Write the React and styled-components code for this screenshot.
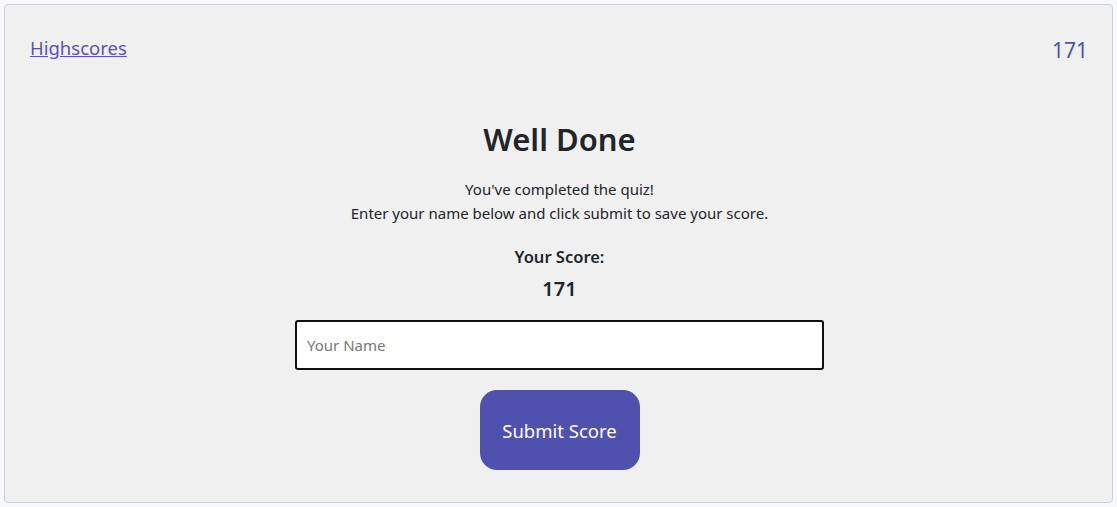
import React from 'react';
import styled, {createGlobalStyle} from 'styled-components';

const Global = createGlobalStyle`
    html, body {
        margin: 0;
        padding: 0;
        background: #f7f8fb;
        font-family: "Noto Sans", "Open Sans", sans-serif;
        color: #212529;
    }
`

const Card = styled.div`
    box-sizing: border-box;
    margin: 4px;
    width: 1109px;
    height: 499px;
    background: #f0f0f0;
    border: 1px solid #cfcfcf;
    border-radius: 4px;
    padding: 30px 25px 0 27px;
`

const TopBar = styled.div`
    display: flex;
    justify-content: space-between;
    align-items: flex-start;
`

const Link = styled.a`
    color: #5b51b8;
    font-size: 18.5px;
    text-decoration: underline;
    line-height: 24px;
    margin-top: 1px;
    margin-left: -2px;
`

const Counter = styled.div`
    color: #5050b0;
    font-size: 21px;
    line-height: 28px;
    margin-top: 1px;
    margin-right: -1px;
`

const Main = styled.div`
    display: flex;
    flex-direction: column;
    align-items: center;
    margin-top: 55px;
`

const Title = styled.h1`
    margin: 0;
    font-size: 31px;
    font-weight: 600;
    line-height: 40px;
`

const Text = styled.p`
    margin: 18px 0 0;
    font-size: 15px;
    line-height: 24px;
    text-align: center;
`

const Label = styled.div`
    margin-top: 18px;
    font-size: 16.5px;
    font-weight: 600;
    line-height: 28px;
`

const Score = styled.div`
    font-size: 20px;
    font-weight: 600;
    line-height: 36px;
`

const Input = styled.input`
    box-sizing: border-box;
    margin-top: 13px;
    width: 529px;
    height: 50px;
    border: 2px solid #111;
    border-radius: 3px;
    background: #fff;
    padding: 0 10px;
    font-family: inherit;
    font-size: 15px;
    outline: none;
    &::placeholder {
        color: #777;
    }
`

const Button = styled.button`
    margin-top: 20px;
    width: 160px;
    height: 80px;
    border: none;
    border-radius: 17px;
    background: #5050ae;
    color: #fff;
    font-family: inherit;
    font-size: 18.5px;
`

const App = () => {
    return (
        <>
            <Global />
            <Card>
                <TopBar>
                    <Link href="#">Highscores</Link>
                    <Counter>171</Counter>
                </TopBar>
                <Main>
                    <Title>Well Done</Title>
                    <Text>You've completed the quiz!<br/>Enter your name below and click submit to save your score.</Text>
                    <Label>Your Score:</Label>
                    <Score>171</Score>
                    <Input placeholder="Your Name" />
                    <Button>Submit Score</Button>
                </Main>
            </Card>
        </>
    )
}

export default App
